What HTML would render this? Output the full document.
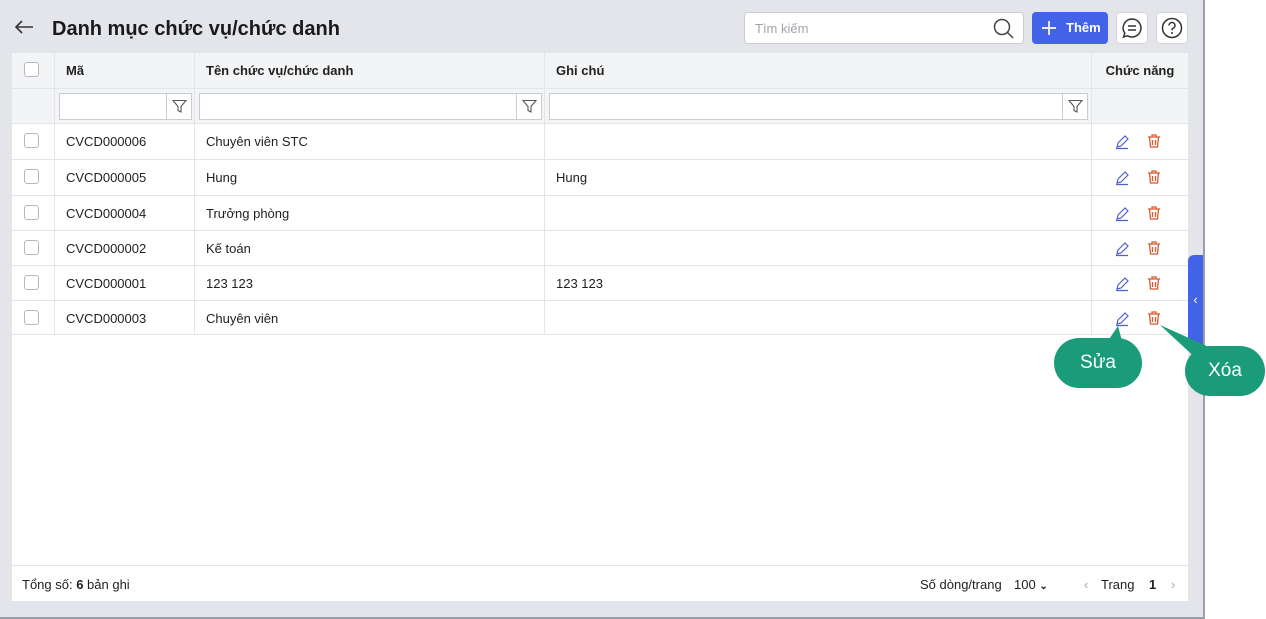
<!DOCTYPE html>
<html><head><meta charset="utf-8"><style>
*{box-sizing:border-box;margin:0;padding:0}
body{width:1266px;height:619px;background:#fff;font-family:"Liberation Sans",sans-serif;position:relative;overflow:hidden;color:#212121}
.frame{position:absolute;left:0;top:0;width:1205px;height:619px;background:#e3e5ea;border-right:2px solid #9a9ea6;border-bottom:2px solid #9a9ea6}
.abs{position:absolute}
.title{left:52px;top:18px;font-size:20px;font-weight:bold;color:#1a1a1a}
.search{left:744px;top:12px;width:280px;height:32px;background:#fff;border:1px solid #c9ccd2;border-radius:4px;font-size:13px;color:#a0a4aa;padding:8px 10px}
.btn{left:1032px;top:12px;width:76px;height:32px;background:#4262e8;border-radius:4px;color:#fff;font-size:13px;font-weight:bold;padding:8px 0 0 34px}
.ib{top:12px;width:32px;height:32px;background:#fff;border:1px solid #d4d7dc;border-radius:4px}
.table{left:12px;top:53px;width:1176px;height:548px;background:#fff}
.row{position:absolute;left:0;width:1176px;height:35px;border-bottom:1px solid #e3e5e8;font-size:13px}
.c{position:absolute;top:0;height:100%;border-right:1px solid #e3e5e8;padding:0 11px;line-height:35px}
.cb{width:15px;height:15px;border:1px solid #b5b8bd;border-radius:3px;background:#fff;position:absolute;left:12px;top:9px}
.fin{position:absolute;top:4px;height:27px;border:1px solid #c9ccd2;background:#fff}
.fin i{position:absolute;right:0;top:0;width:25px;height:25px;border-left:1px solid #c9ccd2}
.fin i svg{position:absolute;left:5px;top:5px}
.bubble{background:#1a9b7a;color:#fff;font-size:19px;text-align:center;border-radius:30px}
</style></head><body>
<div class="frame"></div>
<svg class="abs" style="left:14px;top:19px" width="20" height="16" viewBox="0 0 20 16"><path d="M19 8H2M8 2L2 8l6 6" fill="none" stroke="#333" stroke-width="1.6"/></svg>
<div class="abs title">Danh mục chức vụ/chức danh</div>
<div class="abs search">Tìm kiếm
<svg class="abs" style="left:248px;top:5px" width="22" height="22" viewBox="0 0 22 22"><circle cx="9" cy="9" r="7.5" fill="none" stroke="#444" stroke-width="1.5"/><path d="M14.5 14.5L20 20" stroke="#444" stroke-width="1.5"/></svg></div>
<div class="abs btn"><svg class="abs" style="left:9px;top:8px" width="16" height="16"><path d="M8 1v14M1 8h14" stroke="#fff" stroke-width="1.7"/></svg>Thêm</div>
<div class="abs ib" style="left:1116px"><svg width="30" height="30" viewBox="0 0 30 30"><path d="M15 6a9 9 0 1 1-4.5 16.8L6.5 24l1.3-3.8A9 9 0 0 1 15 6z" fill="none" stroke="#333" stroke-width="1.5"/><path d="M11 13h8M11 17h8" stroke="#333" stroke-width="1.5"/></svg></div>
<div class="abs ib" style="left:1156px"><svg width="30" height="30" viewBox="0 0 30 30"><circle cx="15" cy="15" r="9.5" fill="none" stroke="#333" stroke-width="1.5"/><path d="M12 12.5a3 3 0 1 1 4 2.8c-.8.4-1 1-1 2" fill="none" stroke="#333" stroke-width="1.5"/><circle cx="15" cy="20" r="1" fill="#333"/></svg></div>

<div class="abs table">
<div class="row" style="top:0;height:36px;background:#f3f4f6;font-weight:bold">
<div class="c" style="left:0;width:43px"><span class="cb"></span></div>
<div class="c" style="left:43px;width:140px">Mã</div>
<div class="c" style="left:183px;width:350px">Tên chức vụ/chức danh</div>
<div class="c" style="left:533px;width:547px">Ghi chú</div>
<div class="c" style="left:1080px;width:96px;border:0;text-align:center">Chức năng</div>
</div>
<div class="row" style="top:36px;background:#f3f4f6">
<div class="c" style="left:0;width:43px"></div>
<div class="c" style="left:43px;width:140px"></div>
<div class="c" style="left:183px;width:350px"></div>
<div class="c" style="left:533px;width:547px"></div>
<div class="fin" style="left:47px;width:133px"><i><svg width="15" height="15" viewBox="0 0 15 15"><path d="M1 1.5h13L9 7.5v5.5L6 11.5v-4z" fill="none" stroke="#555" stroke-width="1.1"/></svg></i></div>
<div class="fin" style="left:187px;width:343px"><i><svg width="15" height="15" viewBox="0 0 15 15"><path d="M1 1.5h13L9 7.5v5.5L6 11.5v-4z" fill="none" stroke="#555" stroke-width="1.1"/></svg></i></div>
<div class="fin" style="left:537px;width:539px"><i><svg width="15" height="15" viewBox="0 0 15 15"><path d="M1 1.5h13L9 7.5v5.5L6 11.5v-4z" fill="none" stroke="#555" stroke-width="1.1"/></svg></i></div>
</div>
<div id="rows"></div>
<div class="abs" style="left:0;top:512px;width:1176px;border-top:1px solid #e3e5e8;height:36px;font-size:13px;line-height:38px">
<span class="abs" style="left:10px">Tổng số: <b>6</b> bản ghi</span>
<span class="abs" style="left:908px">Số dòng/trang</span>
<span class="abs" style="left:1002px">100 <b style="font-size:10px">&#8964;</b></span>
<span class="abs" style="left:1072px;color:#aaa">&lsaquo;</span>
<span class="abs" style="left:1089px">Trang</span>
<span class="abs" style="left:1137px;font-weight:bold">1</span>
<span class="abs" style="left:1159px;color:#aaa">&rsaquo;</span>
</div>
</div>
<div class="abs" style="left:1188px;top:255px;width:15px;height:90px;background:#4262e8;border-radius:6px 0 0 6px;color:#fff;font-size:13px;line-height:90px;text-align:center">&lsaquo;</div>
<svg class="abs" style="left:0;top:0" width="1266" height="619"><path d="M1103 348L1118 326L1125 352Z" fill="#1a9b7a"/><path d="M1200 362L1160 325L1220 352Z" fill="#1a9b7a"/></svg>
<div class="abs bubble" style="left:1054px;top:338px;width:88px;height:50px;line-height:50px">Sửa</div>
<div class="abs bubble" style="left:1185px;top:346px;width:80px;height:50px;line-height:50px">Xóa</div>
<script>
const d=[["CVCD000006","Chuyên viên STC",""],["CVCD000005","Hung","Hung"],["CVCD000004","Trưởng phòng",""],["CVCD000002","Kế toán",""],["CVCD000001","123 123","123 123"],["CVCD000003","Chuyên viên",""]];
const tops=[71,107,143,178,213,248];
const pen='<svg width="16" height="16" viewBox="0 0 16 16" style="position:absolute;left:22px;top:10px"><path d="M3 13l1-4 7-7 3 3-7 7z M2 14.5h12" fill="none" stroke="#4f5fd0" stroke-width="1.2"/></svg>';
const bin='<svg width="16" height="16" viewBox="0 0 16 16" style="position:absolute;left:54px;top:9px"><path d="M2 4h12M6 4V2h4v2M3.5 4l1 10h7l1-10M6.5 7v5M9.5 7v5" fill="none" stroke="#d9592e" stroke-width="1.3"/></svg>';
let h="";d.forEach((r,i)=>{h+=`<div class="row" style="top:${tops[i]}px;height:${(tops[i+1]||282)-tops[i]}px"><div class="c" style="left:0;width:43px"><span class="cb"></span></div><div class="c" style="left:43px;width:140px">${r[0]}</div><div class="c" style="left:183px;width:350px">${r[1]}</div><div class="c" style="left:533px;width:547px">${r[2]}</div><div class="c" style="left:1080px;width:96px;border:0">${pen}${bin}</div></div>`});
document.getElementById("rows").innerHTML=h;
</script>
</body></html>
